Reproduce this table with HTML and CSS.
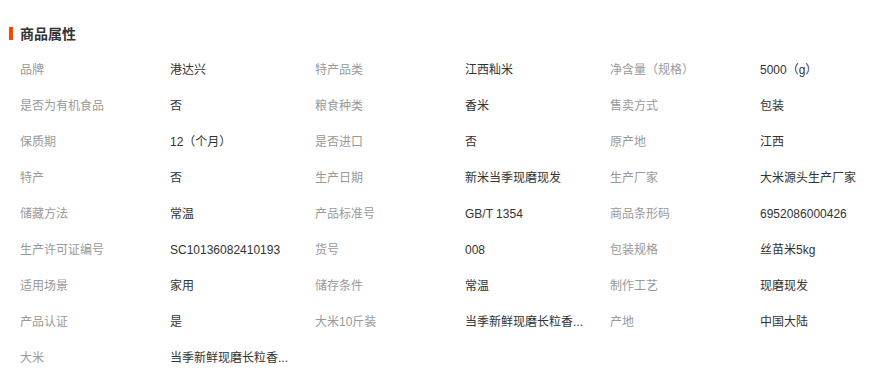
FILE: index.html
```html
<!DOCTYPE html>
<html lang="zh-CN">
<head>
<meta charset="utf-8">
<link rel="stylesheet" href="styles.css">
</head>
<body>
<div class="attrs">
  <h3 class="title">商品属性</h3>
  <ul class="grid">
    <li><span class="k">品牌</span><span class="v">港达兴</span></li>
    <li><span class="k">特产品类</span><span class="v">江西籼米</span></li>
    <li><span class="k">净含量（规格）</span><span class="v">5000（g）</span></li>
    <li><span class="k">是否为有机食品</span><span class="v">否</span></li>
    <li><span class="k">粮食种类</span><span class="v">香米</span></li>
    <li><span class="k">售卖方式</span><span class="v">包装</span></li>
    <li><span class="k">保质期</span><span class="v">12（个月）</span></li>
    <li><span class="k">是否进口</span><span class="v">否</span></li>
    <li><span class="k">原产地</span><span class="v">江西</span></li>
    <li><span class="k">特产</span><span class="v">否</span></li>
    <li><span class="k">生产日期</span><span class="v">新米当季现磨现发</span></li>
    <li><span class="k">生产厂家</span><span class="v">大米源头生产厂家</span></li>
    <li><span class="k">储藏方法</span><span class="v">常温</span></li>
    <li><span class="k">产品标准号</span><span class="v">GB/T 1354</span></li>
    <li><span class="k">商品条形码</span><span class="v">6952086000426</span></li>
    <li><span class="k">生产许可证编号</span><span class="v">SC10136082410193</span></li>
    <li><span class="k">货号</span><span class="v">008</span></li>
    <li><span class="k">包装规格</span><span class="v">丝苗米5kg</span></li>
    <li><span class="k">适用场景</span><span class="v">家用</span></li>
    <li><span class="k">储存条件</span><span class="v">常温</span></li>
    <li><span class="k">制作工艺</span><span class="v">现磨现发</span></li>
    <li><span class="k">产品认证</span><span class="v">是</span></li>
    <li><span class="k">大米10斤装</span><span class="v" title="当季新鲜现磨长粒香米">当季新鲜现磨长粒香...</span></li>
    <li><span class="k">产地</span><span class="v">中国大陆</span></li>
    <li><span class="k">大米</span><span class="v" title="当季新鲜现磨长粒香米">当季新鲜现磨长粒香...</span></li>
  </ul>
</div>
</body>
</html>
```

FILE: styles.css
```css
html, body {
  margin: 0;
  padding: 0;
  background: #fff;
}
body {
  font-family: "Liberation Sans", "Noto Sans CJK SC", sans-serif;
  font-size: 12px;
  color: #333;
}
.attrs {
  padding: 22px 0 0 0;
}
.title {
  position: relative;
  margin: 0;
  padding-left: 20px;
  height: 24px;
  line-height: 24px;
  font-size: 14px;
  font-weight: bold;
  color: #333;
}
.title::before {
  content: "";
  position: absolute;
  left: 9px;
  top: 5px;
  width: 4px;
  height: 13px;
  background: #ff4400;
}
.grid {
  list-style: none;
  margin: 6px 0 0 0;
  padding: 0 0 0 20px;
  display: grid;
  grid-template-columns: repeat(3, 295px);
}
.grid li {
  display: flex;
  height: 36px;
  line-height: 36px;
  white-space: nowrap;
}
.k {
  width: 150px;
  flex: none;
  color: #999;
}
.v {
  width: 125px;
  color: #333;
}
```
